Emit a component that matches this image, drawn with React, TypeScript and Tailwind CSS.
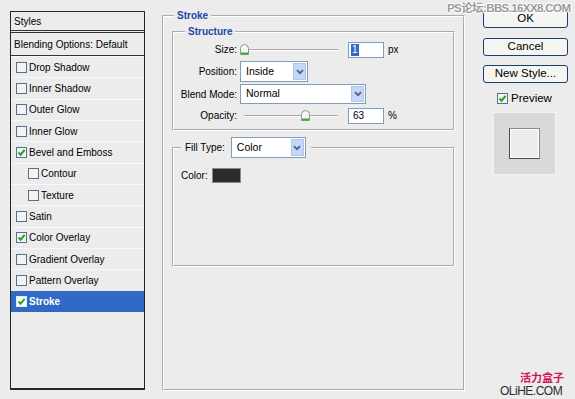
import React from "react";

function Check({ checked, white }: { checked?: boolean; white?: boolean }) {
  return (
    <div
      className={
        "w-[11px] h-[11px] shrink-0 border flex items-center justify-center " +
        (white ? "border-[#dfe8f7] bg-white" : "border-[#56718d] bg-[#f3f3f3]")
      }
    >
      {checked && (
        <svg width="9" height="9" viewBox="0 0 9 9">
          <path d="M1.5 4.5 L3.6 6.7 L7.6 1.8" fill="none" stroke="#22a52a" strokeWidth="2" />
        </svg>
      )}
    </div>
  );
}

function Thumb() {
  return (
    <svg width="9" height="11" viewBox="0 0 9 11" className="block">
      <path d="M0.5 10.5 V4.5 Q0.5 0.5 4.5 0.5 Q8.5 0.5 8.5 4.5 V10.5 Z" fill="#f6f6f2" stroke="#8c9a8c" />
      <path d="M1 9.5 H8" stroke="#36b03c" strokeWidth="2" />
    </svg>
  );
}

function Chevron() {
  return (
    <div className="w-[13px] h-full bg-[#c6d6f6] border border-[#b0c4ee] flex items-center justify-center">
      <svg width="8" height="6" viewBox="0 0 8 6">
        <path d="M1 1.2 L4 4.2 L7 1.2" fill="none" stroke="#4d6185" strokeWidth="1.8" />
      </svg>
    </div>
  );
}

function Select({ value, w, h }: { value: string; w: string; h: string }) {
  return (
    <div className={"flex items-center bg-white border border-[#7f9db9] pl-[5px] pr-[1px] py-[1px] " + w + " " + h}>
      <span className="flex-1 text-[10.5px]">{value}</span>
      <Chevron />
    </div>
  );
}

function Row({
  label,
  checked,
  indent,
  selected,
}: {
  label: string;
  checked?: boolean;
  indent?: boolean;
  selected?: boolean;
}) {
  return (
    <div
      className={
        "h-[21.33px] flex items-center gap-[2px] border-t " +
        (indent ? "pl-[17px] " : "pl-[5px] ") +
        (selected ? "bg-[#316ac5] border-[#316ac5] text-white font-bold" : "border-[#f8f8f8]")
      }
    >
      <Check checked={checked} white={selected} />
      <span>{label}</span>
    </div>
  );
}

export default function App() {
  return (
    <div className="w-[575px] h-[399px] bg-[#ececec] relative overflow-hidden flex items-start font-['Liberation_Sans',Arial,sans-serif] text-[10px] text-black">
      {/* Left styles list */}
      <div className="ml-[10px] mt-[11px] w-[135px] h-[379px] border border-[#262626] border-b-2 flex flex-col shrink-0">
        <div className="h-[21px] flex items-center pl-[3px] border-b-[3px] border-double border-[#333]">Styles</div>
        <div className="h-[23px] flex items-center pl-[3px] border-b border-[#333]">Blending Options: Default</div>
        <div className="flex flex-col">
          <Row label="Drop Shadow" />
          <Row label="Inner Shadow" />
          <Row label="Outer Glow" />
          <Row label="Inner Glow" />
          <Row label="Bevel and Emboss" checked />
          <Row label="Contour" indent />
          <Row label="Texture" indent />
          <Row label="Satin" />
          <Row label="Color Overlay" checked />
          <Row label="Gradient Overlay" />
          <Row label="Pattern Overlay" />
          <Row label="Stroke" checked selected />
        </div>
      </div>

      {/* Middle stroke panel */}
      <fieldset className="ml-[17px] mt-[9px] w-[303px] h-[382px] border-2 border-white [border-style:groove] shrink-0">
        <legend className="ml-[10px] px-[3px] font-bold text-[#1f45a5] leading-[13px]">Stroke</legend>

        <fieldset className="mx-[8px] mt-[3px] border-2 border-white [border-style:groove]">
          <legend className="ml-[11px] px-[3px] font-bold text-[#1f45a5] leading-[13px]">Structure</legend>
          <div className="flex flex-col pb-[5px]">
            <div className="mt-[3px] h-[17px] flex items-center">
              <div className="w-[63px] text-right">Size:</div>
              <div className="ml-[3px] w-[98px] relative h-[11px] flex items-center">
                <div className="absolute left-[6px] right-0 top-[5px] h-[2px] border-t border-[#a9a9a9] border-b border-b-white" />
                <div className="absolute left-0 top-0">
                  <Thumb />
                </div>
              </div>
              <div className="ml-[10px] w-[36px] h-[16px] bg-white border border-[#7f9db9] flex items-center pl-[2px]">
                <span className="bg-[#316ac5] text-white px-[1px] leading-[12px]">1</span>
              </div>
              <span className="ml-[4px]">px</span>
            </div>
            <div className="mt-[3px] h-[21px] flex items-center">
              <div className="w-[63px] text-right">Position:</div>
              <div className="ml-[3px]">
                <Select value="Inside" w="w-[68px]" h="h-[21px]" />
              </div>
            </div>
            <div className="mt-[2px] h-[20px] flex items-center">
              <div className="w-[63px] text-right">Blend Mode:</div>
              <div className="ml-[3px]">
                <Select value="Normal" w="w-[126px]" h="h-[20px]" />
              </div>
            </div>
            <div className="mt-[3px] h-[17px] flex items-center">
              <div className="w-[63px] text-right">Opacity:</div>
              <div className="ml-[3px] w-[98px] relative h-[11px] flex items-center">
                <div className="absolute left-[4px] right-0 top-[5px] h-[2px] border-t border-[#a9a9a9] border-b border-b-white" />
                <div className="absolute left-[61px] top-0">
                  <Thumb />
                </div>
              </div>
              <div className="ml-[10px] w-[36px] h-[16px] bg-white border border-[#7f9db9] flex items-center pl-[4px]">
                63
              </div>
              <span className="ml-[4px]">%</span>
            </div>
          </div>
        </fieldset>

        <fieldset className="mx-[8px] mt-[6px] border-2 border-white [border-style:groove]">
          <legend className="ml-[7px] pl-[4px] pr-[5px] flex items-center">
            <span>Fill Type:</span>
            <div className="ml-[6px]">
              <Select value="Color" w="w-[75px]" h="h-[21px]" />
            </div>
          </legend>
          <div className="h-[107px] pt-[10px] pl-[7px]">
            <div className="h-[15px] flex items-center">
              <span>Color:</span>
              <div className="ml-[4px] w-[29px] h-[15px] bg-[#2b2b2b] border border-[#8a8a8a]" />
            </div>
          </div>
        </fieldset>
      </fieldset>

      {/* Right column */}
      <div className="ml-[18px] mt-[10px] w-[85px] flex flex-col text-[11.5px] shrink-0">
        <button className="h-[18px] w-[85px] rounded-[3px] border border-[#1c3c6c] bg-[#f5f5f2] flex items-center justify-center">OK</button>
        <button className="mt-[10px] h-[18px] w-[85px] rounded-[3px] border border-[#1c3c6c] bg-[#f5f5f2] flex items-center justify-center">Cancel</button>
        <button className="mt-[9px] h-[18px] w-[85px] rounded-[3px] border border-[#1c3c6c] bg-[#f5f5f2] flex items-center justify-center">New Style...</button>
        <div className="mt-[10px] ml-[14px] h-[11px] flex items-center gap-[3px]">
          <Check checked />
          <span>Preview</span>
        </div>
        <div className="mt-[8px] ml-[10px] w-[63px] h-[63px] bg-[#d9d9d9] border border-[#f4f4f4] flex items-center justify-center">
          <div className="w-[31px] h-[31px] border border-[#4a4a4a] border-t-[#8a8a8a] border-r-[#8a8a8a] bg-[#ececec] shadow-[inset_1px_1px_0_#fff,inset_-1px_-1px_0_#fff]" />
        </div>
      </div>

      {/* Watermarks */}
      <div className="absolute left-[447px] top-[1px] whitespace-nowrap text-[11.5px] font-bold text-[#9a9a9a] [text-shadow:1px_0_0_#fff,-1px_0_0_#fff,0_1px_0_#fff,0_-1px_0_#fff] font-['Liberation_Sans','Noto_Sans_CJK_SC',sans-serif] tracking-[-0.6px] leading-[14px]">
        PS论坛:BBS.16XX8.COM
      </div>
      <div className="absolute left-[520px] top-[371px] whitespace-nowrap text-[11px] font-bold text-[#d4145a] leading-[13px] font-['Noto_Sans_CJK_SC',sans-serif]">
        活力盒子
      </div>
      <div className="absolute left-[500px] top-[385px] whitespace-nowrap text-[12px] text-[#2b2b2b] leading-[13px] tracking-[-0.5px] font-['Liberation_Sans',sans-serif]">
        OLiHE.COM
      </div>
    </div>
  );
}
